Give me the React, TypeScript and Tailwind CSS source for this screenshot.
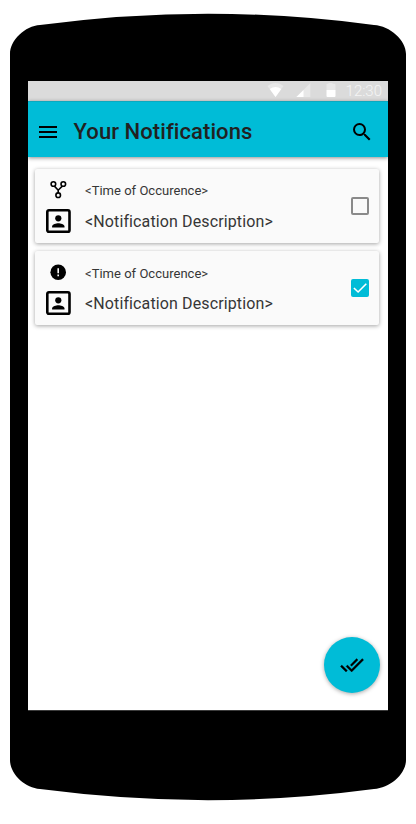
import type { ReactNode } from "react";

function ForkIcon() {
  return (
    <svg className="block h-6 w-6" viewBox="0 0 24 24" fill="none" stroke="#000" strokeWidth="1.6">
      <circle cx="7.4" cy="7" r="2.3" />
      <circle cx="17.3" cy="7" r="2.3" />
      <circle cx="12.2" cy="18.2" r="2.3" />
      <path d="M8.4 9.1 L12.2 13.2 L16.3 9.1 M12.2 13 V16" />
    </svg>
  );
}

function ErrorIcon() {
  return (
    <svg className="block h-6 w-6" viewBox="0 0 24 24">
      <circle cx="12.2" cy="13.2" r="7.8" />
      <path fill="#fafafa" d="M11.4 9.2h1.6v5h-1.6zM11.4 15.6h1.6v1.6h-1.6z" />
    </svg>
  );
}

function PortraitIcon() {
  return (
    <svg className="block h-6 w-[25px]" viewBox="0 0 25 24">
      <rect x="1.3" y="1.3" width="22.2" height="21.6" rx="1.6" fill="none" stroke="#000" strokeWidth="2.6" />
      <circle cx="12.3" cy="9.3" r="3.1" />
      <path d="M6.1 18.5v-1c0-2.1 4.1-3.2 6.2-3.2s6.2 1.1 6.2 3.2v1z" />
    </svg>
  );
}

function Checkbox({ checked }: { checked: boolean }) {
  return checked ? (
    <svg className="block h-[18px] w-[18px]" viewBox="0 0 18 18">
      <rect width="18" height="18" rx="2" fill="#00bcd7" />
      <path d="M2.9 9 L7.1 13 L15.3 4.8" fill="none" stroke="#fff" strokeWidth="1.6" />
    </svg>
  ) : (
    <span className="block h-[18px] w-[18px] rounded-[2px] border-2 border-[#8a8a8a]" />
  );
}

function NotificationCard({ icon, checked }: { icon: ReactNode; checked: boolean }) {
  return (
    <article className="flex h-[74px] items-center rounded-[2px] bg-[#fafafa] pr-2.5 pl-[11px] shadow-[0_1px_4px_rgba(0,0,0,0.36)]">
      <div className="flex h-full w-[25px] flex-col items-center pt-2">
        <div className="-ml-px h-8">{icon}</div>
        <PortraitIcon />
      </div>
      <div className={`ml-3.5 flex h-full grow flex-col text-[#363636] ${checked ? "gap-[11px] pt-[15px]" : "gap-3 pt-3.5"}`}>
        <p className="text-[13px] leading-4 tracking-[0.02px]">&lt;Time of Occurence&gt;</p>
        <p className="pt-px text-base leading-5 tracking-[0.12px]">&lt;Notification Description&gt;</p>
      </div>
      <Checkbox checked={checked} />
    </article>
  );
}

function StatusBar() {
  return (
    <div className="flex h-5 shrink-0 items-center justify-end bg-[#dbdbdb] pr-1.5 text-[#f5f5f5]">
      <svg className="h-5 w-[76px]" viewBox="0 0 76 20">
        <path d="M.5 5C5.5 1 11.5 1 16.5 5L8.5 16z" fill="#e8e8e8" />
        <path d="M2.7 8C6.5 5.2 10.5 5.2 14.3 8L8.5 16z" fill="#fff" />
        <path d="M43.4 2v14h-14z" fill="#e8e8e8" />
        <path d="M36.5 8.9V16h-7.1z" fill="#fff" />
        <path d="M59.5 3.5q0-.8 1-.8h1V2h4v.7h1.5q1.5 0 1.5 1.3v5h-9z" fill="#e8e8e8" />
        <path d="M59.5 9h9v6q0 1-1 1h-7q-1 0-1-1z" fill="#fff" />
      </svg>
      <span className="w-[39px] text-right text-[15px] leading-5 font-light">12:30</span>
    </div>
  );
}

export default function App() {
  return (
    <div className="relative h-[824px] w-[416px] bg-white px-7 pt-[81px] font-[Roboto,sans-serif]">
      <svg className="absolute inset-0 h-full w-full" viewBox="0 0 416 824">
        <path d="M10 54C10 40 25 26 40 25Q124 13.8 208 13.7Q291 13.8 374 25C390 26 406 40 406 54V760C406 774 390 788 374 789Q291 800 208 800.2Q124 800 40 789C25 788 10 774 10 760Z" />
      </svg>
      <div className="relative flex h-[630px] w-[360px] flex-col border-b border-[#3c3c3c] bg-white">
        <StatusBar />
        <header className="z-10 flex h-14 shrink-0 items-center border-t border-[#0aa9bf] bg-[#00bcd7] pr-[14px] pl-2 shadow-[0_1px_4px_rgba(0,0,0,0.45)]">
          <svg className="mt-[5px] h-6 w-6" viewBox="0 0 24 24">
            <path d="M3 18h18v-2H3zM3 13h18v-2H3zM3 6v2h18V6z" />
          </svg>
          <h1 className="mt-1 ml-[13.5px] grow text-[22px] leading-7 font-medium tracking-[0.08px] text-[#212121]">Your Notifications</h1>
          <svg className="mt-[5px] h-6 w-6" viewBox="0 0 24 24">
            <path d="M15.5 14h-.79l-.28-.27A6.471 6.471 0 0 0 16 9.5 6.5 6.5 0 1 0 9.5 16c1.61 0 3.09-.59 4.23-1.57l.27.28v.79l5 4.99L20.49 19l-4.99-5zm-6 0C7.01 14 5 11.99 5 9.5S7.01 5 9.5 5 14 7.01 14 9.5 11.99 14 9.5 14z" />
          </svg>
        </header>
        <main className="flex grow flex-col gap-2 pt-3 pr-[9px] pl-[7px]">
          <NotificationCard icon={<ForkIcon />} checked={false} />
          <NotificationCard icon={<ErrorIcon />} checked />
        </main>
        <button className="absolute right-[8.5px] bottom-[17px] flex h-14 w-14 items-center justify-center rounded-full bg-[#00bcd7] shadow-[0_1px_4px_rgba(0,0,0,0.35)]">
          <svg className="mb-px h-6 w-6" viewBox="0 0 24 24" stroke="#000" strokeWidth="0.3">
            <path d="M18 7l-1.41-1.41-6.34 6.34 1.41 1.41L18 7zm4.24-1.41L11.66 16.17 7.48 12l-1.41 1.41L11.66 19l12-12-1.42-1.41zM.41 13.41L6 19l1.41-1.41L1.83 12 .41 13.41z" />
          </svg>
        </button>
      </div>
    </div>
  );
}
